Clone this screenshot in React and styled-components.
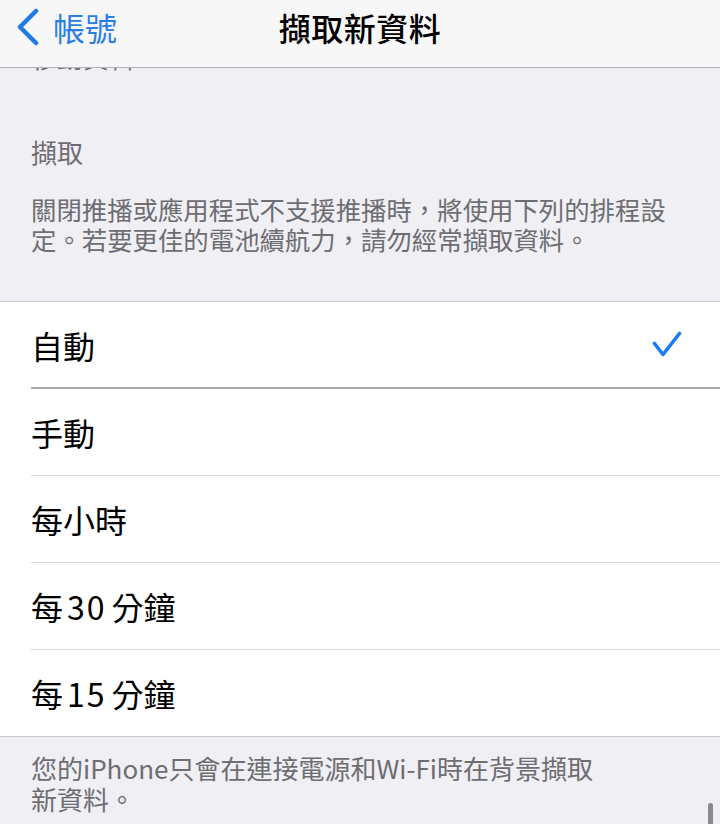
import React from 'react';
import styled, { createGlobalStyle } from 'styled-components';

const GlobalStyle = createGlobalStyle`
	html, body {
		margin: 0;
		padding: 0;
		background: #efeff4;
	}
	body {
		font-family: 'Noto Sans CJK TC', 'Noto Sans', sans-serif;
		-webkit-font-smoothing: antialiased;
	}
`;

const Screen = styled.div`
	position: relative;
	width: 720px;
	height: 824px;
	overflow: hidden;
	background: #efeff4;
`;

const NavBar = styled.div`
	height: 68px;
	display: grid;
	grid-template-columns: 1fr auto 1fr;
	align-items: start;
	padding-top: 4px;
	box-sizing: border-box;
	background: #f7f7f8;
	border-bottom: 1px solid #b4b4b8;
`;

const BackButton = styled.div`
	display: flex;
	align-items: center;
	gap: 13px;
	padding-left: 16px;
	height: 46px;
	color: #2a7ee3;
	font-size: 32px;
	line-height: 46px;
`;

const NavTitle = styled.div`
	font-size: 32px;
	font-weight: 500;
	line-height: 46px;
	color: #000;
	letter-spacing: 0.5px;
`;

const ClippedLine = styled.div`
	height: 4px;
	overflow: hidden;
	padding-left: 31px;
	color: #6d6d72;
	font-size: 26px;
	line-height: 26px;
	& > span {
		display: block;
		margin-top: -24px;
	}
`;

const SectionHeader = styled.div`
	margin-top: 65px;
	padding: 0 31px;
	font-size: 26px;
	line-height: 30px;
	color: #6d6d72;
`;

const Note = styled.p`
	margin: ${p => p.$top}px 0 0;
	padding: 0 31px;
	font-size: ${p => p.$size}px;
	line-height: ${p => p.$lh}px;
	color: #6d6d72;
`;

const List = styled.div`
	margin-top: 47px;
	background: #fff;
	border-top: 1px solid #c8c7cc;
	border-bottom: 1px solid #c8c7cc;
`;

const Row = styled.div`
	display: flex;
	align-items: center;
	justify-content: space-between;
	margin-left: 31px;
	padding-right: 38px;
	font-size: 32px;
	color: #000;
	border-bottom: ${p => (p.$last ? 'none' : p.$strong ? '2px solid #a9a9ad' : '1px solid #d9d9dd')};
	height: ${p => (p.$strong ? 85 : 86)}px;
`;

const Digits = styled.span`
	padding: 0 5px 0 4px;
	letter-spacing: 2px;
`;

const ScrollThumb = styled.div`
	position: absolute;
	right: 7px;
	bottom: -4px;
	width: 5px;
	height: 25px;
	border-radius: 3px;
	background: #8a8a8e;
`;

const Chevron = () => (
	<svg width="24" height="38" viewBox="0 0 24 38">
		<path d="M20 3 L4 19 L20 35" fill="none" stroke="#1f7ae6" strokeWidth="4.5" strokeLinecap="round" strokeLinejoin="round" />
	</svg>
);

const Check = () => (
	<svg width="30" height="27" viewBox="0 0 30 27">
		<path d="M2.5 12.5 L11 23.5 L27.5 2.5" fill="none" stroke="#1a7cf5" strokeWidth="3.6" strokeLinecap="round" strokeLinejoin="round" />
	</svg>
);

const options = ['自動', '手動', '每小時', '每30分鐘', '每15分鐘'];

// split the digits out so they get the wider spacing seen in the shot
const renderLabel = label =>
	label.split(/(\d+)/).map((part, i) =>
		/^\d+$/.test(part) ? <Digits key={i}>{part}</Digits> : part
	);

const App = () => {
	return (
		<Screen>
			<GlobalStyle />
			<NavBar>
				<BackButton>
					<Chevron />
					<span>帳號</span>
				</BackButton>
				<NavTitle>擷取新資料</NavTitle>
				<div />
			</NavBar>
			<ClippedLine>
				<span>移動資料</span>
			</ClippedLine>
			<SectionHeader>擷取</SectionHeader>
			<Note $top={27} $lh={30} $size={25.4}>
				關閉推播或應用程式不支援推播時，將使用下列的排程設
				<br />
				定。若要更佳的電池續航力，請勿經常擷取資料。
			</Note>
			<List>
				{options.map((o, i) => (
					<Row key={o} $strong={i === 0} $last={i === options.length - 1}>
						<span>{renderLabel(o)}</span>
						{i === 0 && <Check />}
					</Row>
				))}
			</List>
			<Note $top={15} $lh={31} $size={26}>
				您的iPhone只會在連接電源和Wi-Fi時在背景擷取
				<br />
				新資料。
			</Note>
			<ScrollThumb />
		</Screen>
	);
};

export default App;
